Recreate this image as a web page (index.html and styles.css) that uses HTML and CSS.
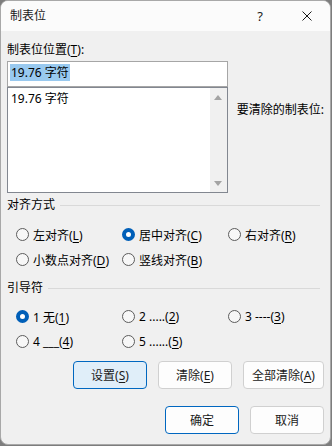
FILE: index.html
```html
<!DOCTYPE html>
<html lang="zh-CN">
<head>
    <meta charset="UTF-8">
    <title>制表位</title>
    <link rel="stylesheet" href="styles.css">
</head>
<body>
    <div class="dialog">
        <div class="titlebar">
            <span class="title">制表位</span>
            <span class="caption-btn help">?</span>
            <span class="caption-btn close">
                <svg width="10" height="10" viewBox="0 0 10 10"><path d="M0.5 0.5 L9.5 9.5 M9.5 0.5 L0.5 9.5" stroke="#1a1a1a" stroke-width="1"/></svg>
            </span>
        </div>

        <div class="client">
            <div class="label first">制表位位置(<u>T</u>):</div>

            <div class="tabpos">
                <div class="tabpos-left">
                    <div class="textbox"><span class="selected">19.76 字符</span></div>
                    <div class="listbox">
                        <div class="list-items">
                            <div class="list-item">19.76 字符</div>
                        </div>
                        <div class="scrollbar">
                            <span class="arrow up"></span>
                            <span class="arrow down"></span>
                        </div>
                    </div>
                </div>
                <div class="tabpos-right">要清除的制表位:</div>
            </div>

            <div class="group-header"><span>对齐方式</span><span class="rule"></span></div>
            <div class="radios">
                <div class="radio"><span class="dot"></span><span>左对齐(<u>L</u>)</span></div>
                <div class="radio"><span class="dot checked"></span><span>居中对齐(<u>C</u>)</span></div>
                <div class="radio"><span class="dot"></span><span>右对齐(<u>R</u>)</span></div>
                <div class="radio"><span class="dot"></span><span>小数点对齐(<u>D</u>)</span></div>
                <div class="radio"><span class="dot"></span><span>竖线对齐(<u>B</u>)</span></div>
            </div>

            <div class="group-header leader"><span>引导符</span><span class="rule"></span></div>
            <div class="radios">
                <div class="radio"><span class="dot checked"></span><span>1 无(<u>1</u>)</span></div>
                <div class="radio"><span class="dot"></span><span>2 .....(<u>2</u>)</span></div>
                <div class="radio"><span class="dot"></span><span>3 ----(<u>3</u>)</span></div>
                <div class="radio"><span class="dot"></span><span>4 ___(<u>4</u>)</span></div>
                <div class="radio"><span class="dot"></span><span>5 ......(<u>5</u>)</span></div>
            </div>

            <div class="button-row">
                <div class="btn focused"><span>设置(<u>S</u>)</span></div>
                <div class="btn"><span>清除(<u>E</u>)</span></div>
                <div class="btn wide"><span>全部清除(<u>A</u>)</span></div>
            </div>

            <div class="button-row bottom">
                <div class="btn primary">确定</div>
                <div class="btn">取消</div>
            </div>
        </div>
    </div>
</body>
</html>
```

FILE: styles.css
```css
body {
    margin: 0;
    background-color: #7d7d7d;
    font-family: "Noto Sans", "Noto Sans CJK SC", sans-serif;
    font-size: 12px;
    color: #000;
}
.dialog {
    width: 331px;
    height: 445px;
    box-sizing: border-box;
    border: 1px solid #a8a8a8;
    border-radius: 8px;
    background-color: #f0f0f0;
    overflow: hidden;
}
.titlebar {
    height: 30px;
    display: flex;
    align-items: center;
    background-color: #fbfbfb;
}
.title {
    flex: 1;
    padding-left: 9px;
    line-height: 16px;
    color: #1a1a1a;
}
.caption-btn {
    width: 46px;
    height: 30px;
    display: flex;
    align-items: center;
    justify-content: center;
    color: #1a1a1a;
}
.help {
    font-size: 13px;
}
.close {
    padding-left: 1px;
}
.client {
    padding: 0 6px 0 6px;
}
.label {
    line-height: 16px;
}
.label.first {
    margin-top: 11px;
}
u {
    text-decoration-thickness: 1px;
    text-underline-offset: 2px;
}
.tabpos {
    display: flex;
    margin-top: 3px;
}
.tabpos-left {
    width: 222px;
}
.tabpos-right {
    padding-left: 9px;
    padding-top: 41px;
    line-height: 16px;
    white-space: nowrap;
}
.textbox {
    height: 26px;
    box-sizing: border-box;
    border: 1px solid #a6a6a6;
    background: #fff;
    padding: 2px 0 0 2px;
}
.selected {
    display: inline-block;
    background-color: #99c9ef;
    line-height: 17px;
    padding: 0 1px;
}
.listbox {
    height: 106px;
    box-sizing: border-box;
    border: 1px solid #828790;
    background: #fff;
    display: flex;
}
.list-items {
    flex: 1;
    padding: 2px 0 0 3px;
}
.list-item {
    line-height: 17px;
}
.scrollbar {
    width: 17px;
    background-color: #f0f0f0;
    display: flex;
    flex-direction: column;
    justify-content: space-between;
    align-items: center;
    padding: 7px 0 6px;
}
.arrow {
    width: 0;
    height: 0;
    border-left: 4px solid transparent;
    border-right: 4px solid transparent;
}
.arrow.up {
    border-bottom: 5px solid #a3a3a3;
}
.arrow.down {
    border-top: 5px solid #a3a3a3;
}
.group-header {
    display: flex;
    align-items: center;
    margin-top: 4px;
    line-height: 16px;
    gap: 5px;
    padding-right: 4px;
}
.group-header.leader {
    margin-top: 8px;
}
.rule {
    flex: 1;
    height: 1px;
    background-color: #d9d9d9;
}
.radios {
    display: grid;
    grid-template-columns: 106px 106px auto;
    grid-auto-rows: 25px;
    margin-top: 9px;
    padding-left: 9px;
}
.group-header.leader + .radios {
    margin-top: 8px;
}
.radio {
    display: flex;
    align-items: center;
    gap: 4px;
    white-space: nowrap;
}
.dot {
    width: 13px;
    height: 13px;
    box-sizing: border-box;
    border: 1px solid #5c5c5c;
    border-radius: 50%;
    background-color: #f7f7f7;
    flex-shrink: 0;
}
.dot.checked {
    border: 4px solid #005fb8;
    background-color: #fff;
}
.button-row {
    display: flex;
    justify-content: flex-end;
    gap: 11px;
    margin-top: 7px;
}
.button-row.bottom {
    margin-top: 17px;
}
.btn {
    width: 74px;
    height: 28px;
    box-sizing: border-box;
    border: 1px solid #d0d0d0;
    border-radius: 4px;
    background-color: #fdfdfd;
    display: flex;
    align-items: center;
    justify-content: center;
    color: #1a1a1a;
}
.btn.wide {
    width: 81px;
}
.btn.focused {
    background-color: #e0eef9;
    border-color: #0067c0;
}
.btn.primary {
    border-color: #0067c0;
}
```
